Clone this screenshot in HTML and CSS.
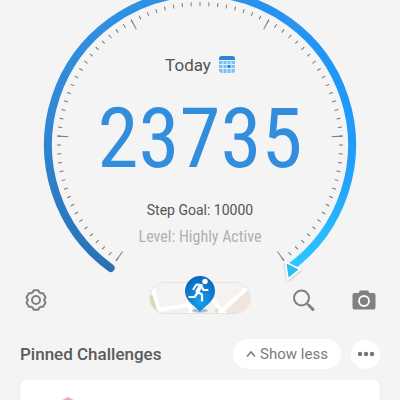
FILE: index.html
```html
<!DOCTYPE html>
<html lang="en">
<head>
<meta charset="utf-8">
<meta name="viewport" content="width=device-width, initial-scale=1">
<title>Steps</title>
<link rel="stylesheet" href="styles.css">
</head>
<body>
<main class="app">
  <section class="gauge">
    <svg class="dial" viewBox="0 0 320 282" aria-hidden="true">
      <defs>
        <linearGradient id="arcLeft" gradientUnits="userSpaceOnUse" x1="0" y1="0" x2="0" y2="270">
          <stop offset="0" stop-color="#2f91e5"/>
          <stop offset=".5" stop-color="#3086d2"/>
          <stop offset=".75" stop-color="#2b7cc5"/>
          <stop offset="1" stop-color="#2a71b4"/>
        </linearGradient>
        <linearGradient id="arcRight" gradientUnits="userSpaceOnUse" x1="0" y1="0" x2="0" y2="270">
          <stop offset="0" stop-color="#2992ed"/>
          <stop offset=".3" stop-color="#1e97fa"/>
          <stop offset=".6" stop-color="#219dfd"/>
          <stop offset="1" stop-color="#2cc8ff"/>
        </linearGradient>
        <filter id="shade" x="-50%" y="-50%" width="200%" height="200%">
          <feDropShadow dx="0" dy="1" stdDeviation="1.5" flood-opacity=".25"/>
        </filter>
      </defs>
      <path class="arc" stroke="url(#arcLeft)" stroke-linecap="round" d="M70.7 268A152 152 0 0 1 160 -7"/>
      <path class="arc" stroke="url(#arcRight)" d="M160 -7A152 152 0 0 1 249.3 268"/>
      <path class="ticks" pathLength="288.4" stroke-width="4" stroke-dasharray=".4 3.2" d="M77.5 259.4A141 141 0 1 1 242.5 259.4"/>
      <path class="ticks" pathLength="288.4" stroke-width="11" stroke-dasharray=".4 57.2" d="M79.6 256.5A137.5 137.5 0 1 1 240.4 256.5"/>
      <path d="M245.500 262L260 269.200L248 279Z" fill="#2cbdf8" stroke="#fff" stroke-width="1.600" filter="url(#shade)"/>
    </svg>
    <div class="readout">
      <div class="day">
        <span>Today</span>
        <svg width="16" height="18" viewBox="0 0 16 18" aria-hidden="true">
          <rect y="0" width="16" height="17" rx="3" fill="#7fbef5"/>
          <path d="M0 4V3a3 3 0 0 1 3-3h10a3 3 0 0 1 3 3v1Z" fill="#2f86d4"/>
          <path d="M0 4.500h16M0 8.500h16M0 12.500h16M4 4v13M8 4v13M12 4v13" stroke="#e4f2fd" stroke-width="1"/>
          <rect x="8.500" y="9" width="3" height="3" fill="#2f86d4"/>
        </svg>
      </div>
      <div class="steps">23735</div>
      <div class="goal">Step Goal: 10000</div>
      <div class="level">Level: Highly Active</div>
    </div>
  </section>

  <nav class="tools">
    <button class="tool" aria-label="Settings">
      <svg width="24" height="24" viewBox="0 0 24 24" fill="none" stroke="#808080" stroke-width="2" stroke-linejoin="round">
        <path d="M9.700 2.300H14.300Q15.350 6 18.900 5.100L21.500 9.350Q19 12 21.500 14.650L18.900 18.900Q15.350 18 14.300 21.700H9.700Q8.650 18 5.100 18.900L2.500 14.650Q5 12 2.500 9.350L5.100 5.100Q8.650 6 9.700 2.300Z"/>
        <circle cx="12" cy="12" r="4"/>
      </svg>
    </button>
    <button class="map" aria-label="Walking map">
      <svg class="streets" viewBox="0 0 102 32" preserveAspectRatio="xMidYMid slice">
        <rect width="102" height="32" fill="#f4f3f1"/>
        <path d="M0 12l5 3 4 17H0Z" fill="#c9dfb9"/>
        <path d="M74 32L102 6v26Z" fill="#f1e4dc"/>
        <path d="M66 28l5-5 4 5-4 4h-5Z" fill="#e4e3c4"/>
        <path d="M1 0l8 28M8 28l32-5M36 0l6 32M102 3L70 32M60 14l18 20" fill="none" stroke="#fff" stroke-width="4"/>
      </svg>
      <svg class="pin" width="32" height="40" viewBox="0 0 32 40">
        <defs>
          <radialGradient id="pinBlue" cx=".5" cy=".7" r=".7">
            <stop offset="0" stop-color="#16a0ee"/>
            <stop offset="1" stop-color="#0a66bd"/>
          </radialGradient>
        </defs>
        <ellipse cx="16" cy="36.500" rx="8" ry="2" fill="#1c5f9e" opacity=".35"/>
        <path d="M16 38C13 33 1 28 1 17a15 15 0 0 1 30 0C31 28 19 33 16 38Z" fill="url(#pinBlue)"/>
        <circle cx="21" cy="7.500" r="2.700" fill="#fff"/>
        <path d="M9.500 15l3-4.500 5 .5-4 7 4.500 2.500v6M17.500 12.500l2 3.500h4M13.500 19l-3 4H5.500" fill="none" stroke="#fff" stroke-width="2.200" stroke-linejoin="round" stroke-linecap="round"/>
        <path d="M16.500 12l-3 5.500" stroke="#fff" stroke-width="4" stroke-linecap="round"/>
      </svg>
    </button>
    <div class="pair">
      <button class="tool" aria-label="Search">
        <svg width="24" height="24" viewBox="0 0 24 24" fill="none" stroke="#808080">
          <circle cx="9.500" cy="10" r="7.500" stroke-width="2"/>
          <path d="M15 15.500l2 2" stroke-width="2"/>
          <path d="M17 17.500l4 4" stroke-width="3" stroke-linecap="round"/>
        </svg>
      </button>
      <button class="tool" aria-label="Camera">
        <svg width="24" height="24" viewBox="0 0 24 24">
          <path d="M2.500 5h4L8 2.500h8L17.500 5h4a2 2 0 0 1 2 2v12.500a2 2 0 0 1-2 2h-19a2 2 0 0 1-2-2V7a2 2 0 0 1 2-2Z" fill="#808080"/>
          <circle cx="12" cy="13" r="5" fill="none" stroke="#fff" stroke-width="1.800"/>
        </svg>
      </button>
    </div>
  </nav>

  <section class="pinned">
    <header class="head">
      <h2 class="title">Pinned Challenges</h2>
      <button class="pill">
        <svg width="10" height="8" viewBox="0 0 10 8" fill="none" stroke="#7b7b7b" stroke-width="1.500" aria-hidden="true"><path d="M1 6.500L5 2l4 4.500"/></svg>
        Show less
      </button>
      <button class="more" aria-label="More">
        <svg width="18" height="6" viewBox="0 0 18 6" fill="#757575"><circle cx="3" cy="3" r="2.200"/><circle cx="9" cy="3" r="2.200"/><circle cx="15" cy="3" r="2.200"/></svg>
      </button>
    </header>
    <article class="card">
      <svg width="24" height="24" viewBox="0 0 24 24" aria-hidden="true"><path d="M12 2l9 5v10l-9 6-9-6V7Z" fill="#f3a5bd" stroke="#f3a5bd" stroke-width="2" stroke-linejoin="round"/></svg>
    </article>
  </section>
</main>
</body>
</html>
```
FILE: styles.css
```css
* { box-sizing: border-box; }

html { overflow: hidden; }

body {
  margin: 0;
  background: #f4f4f4;
  color: #555;
  font-family: Roboto, "Liberation Sans", sans-serif;
}

button {
  border: 0;
  padding: 0;
  background: none;
  color: inherit;
  font: inherit;
  display: flex;
  align-items: center;
  justify-content: center;
}

.app { height: 100vh; overflow: hidden; }

.gauge {
  display: grid;
  justify-items: center;
}

.dial, .readout { grid-area: 1 / 1; }

.dial { width: 320px; }

.arc { fill: none; stroke-width: 8; }

.ticks { fill: none; stroke: #777; }

.readout {
  display: flex;
  flex-direction: column;
  align-items: center;
  padding-top: 53px;
}

.day {
  display: flex;
  align-items: center;
  gap: 8px;
  font-size: 17px;
  line-height: 24px;
}

.steps {
  margin-top: 14px;
  color: #328edc;
  font-family: "Roboto Condensed", Roboto, sans-serif;
  font-size: 83px;
  line-height: 96px;
}

.goal {
  margin-top: 13px;
  font-size: 14px;
  line-height: 20px;
}

.level {
  margin-top: 5px;
  color: #b0b0b0;
  font-family: "Roboto Condensed", Roboto, sans-serif;
  font-size: 16px;
  line-height: 24px;
}

.tools {
  display: grid;
  grid-template-columns: 1fr 102px 1fr;
  align-items: center;
  padding: 0 24px;
}

.tool {
  width: 24px;
  height: 24px;
  margin-top: 3px;
}

.map {
  position: relative;
  height: 32px;
}

.streets {
  width: 100%;
  height: 100%;
  border: 1px solid #e2e2e2;
  border-radius: 16px;
}

.pin {
  position: absolute;
  bottom: 0;
  left: 35px;
}

.pair {
  display: flex;
  justify-content: flex-end;
  gap: 36px;
}

.pinned { padding: 25px 20px 0; }

.head {
  display: flex;
  align-items: center;
  gap: 10px;
}

.title {
  flex: 1;
  margin: 0;
  color: #5a5a5a;
  font-size: 17px;
  font-weight: 500;
  line-height: 24px;
}

.pill {
  gap: 4px;
  width: 108px;
  height: 30px;
  border-radius: 15px;
  background: #fff;
  color: #7b7b7b;
  font-size: 15px;
}

.more {
  width: 29px;
  height: 29px;
  border-radius: 50%;
  background: #fff;
}

.card {
  margin-top: 11px;
  padding: 16px 36px;
  height: 120px;
  border-radius: 8px;
  background: #fff;
  box-shadow: 0 1px 3px rgba(0, 0, 0, .06);
}
```
